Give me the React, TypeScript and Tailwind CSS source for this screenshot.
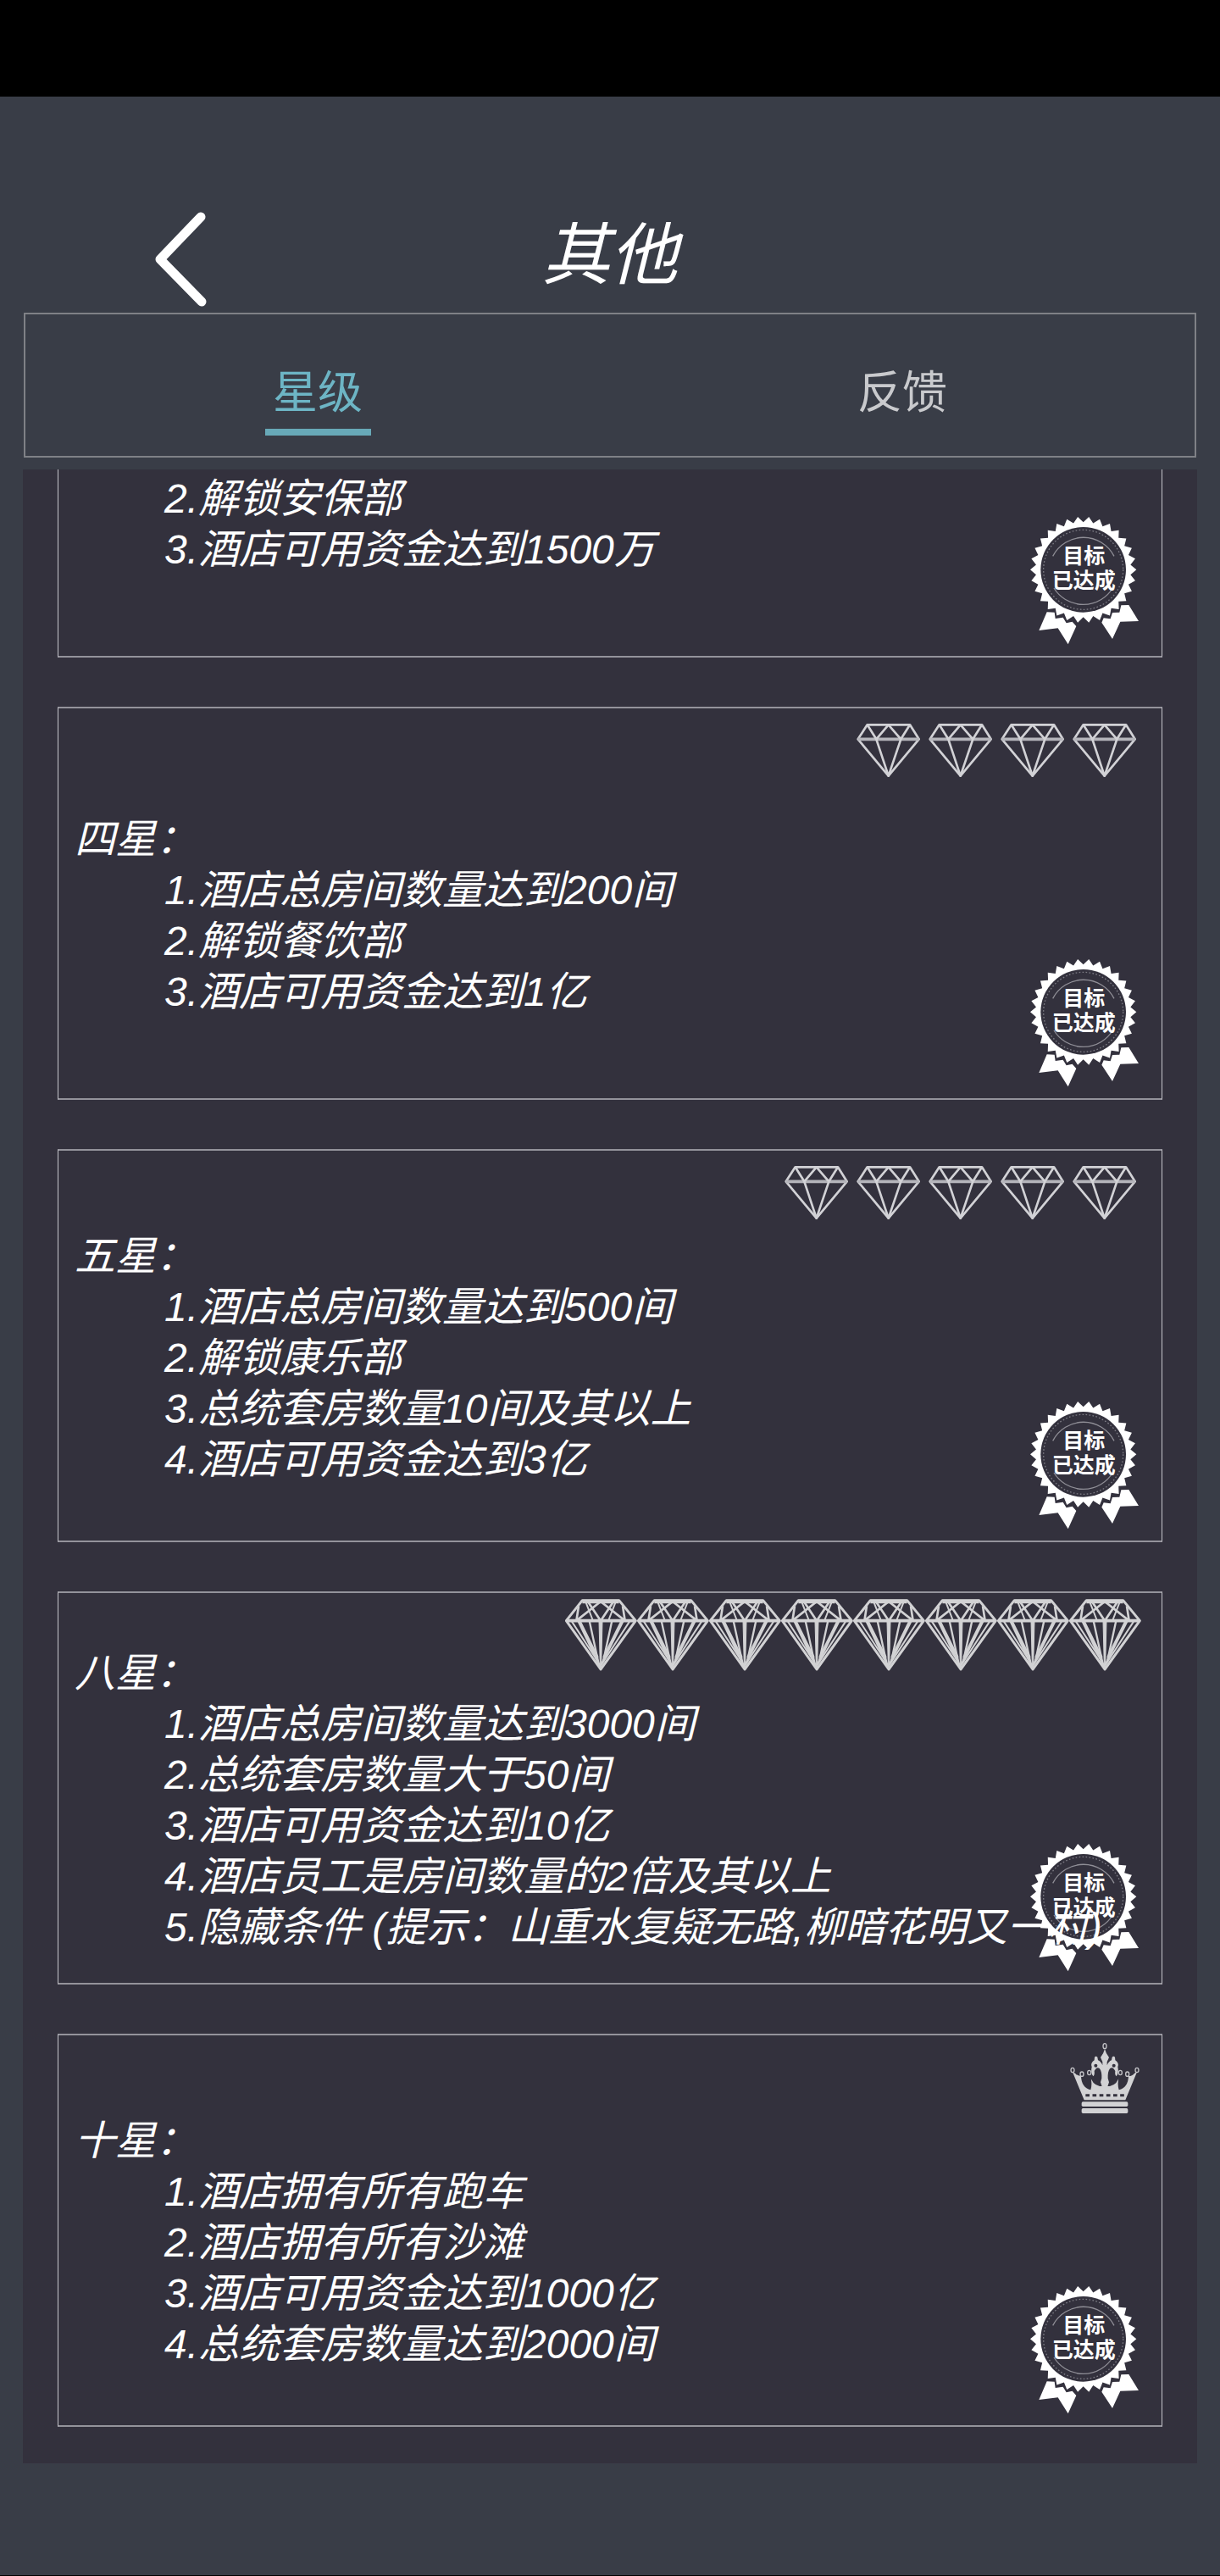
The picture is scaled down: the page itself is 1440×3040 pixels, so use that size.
import { useState } from 'react'

type Rank = 'diamond' | 'brilliant' | 'crown'

interface Level {
  title?: string
  rank?: Rank
  count?: number
  goals: string[]
}

const levels: Level[] = [
  {
    goals: ['2.解锁安保部', '3.酒店可用资金达到1500万'],
  },
  {
    title: '四星：',
    rank: 'diamond',
    count: 4,
    goals: ['1.酒店总房间数量达到200间', '2.解锁餐饮部', '3.酒店可用资金达到1亿'],
  },
  {
    title: '五星：',
    rank: 'diamond',
    count: 5,
    goals: [
      '1.酒店总房间数量达到500间',
      '2.解锁康乐部',
      '3.总统套房数量10间及其以上',
      '4.酒店可用资金达到3亿',
    ],
  },
  {
    title: '八星：',
    rank: 'brilliant',
    count: 8,
    goals: [
      '1.酒店总房间数量达到3000间',
      '2.总统套房数量大于50间',
      '3.酒店可用资金达到10亿',
      '4.酒店员工是房间数量的2倍及其以上',
      '5.隐藏条件 (提示：山重水复疑无路,柳暗花明又一村)',
    ],
  },
  {
    title: '十星：',
    rank: 'crown',
    count: 1,
    goals: [
      '1.酒店拥有所有跑车',
      '2.酒店拥有所有沙滩',
      '3.酒店可用资金达到1000亿',
      '4.总统套房数量达到2000间',
    ],
  },
]

const tabs = ['星级', '反馈']

const Diamond = () => (
  <svg viewBox="0 0 255 255" className="w-[85px] h-[85px]" fill="none" stroke="#d2d2d6" strokeWidth="8" strokeLinejoin="round">
    <path d="M50 37H201L233 88L125 218L17 88Z" />
    <path d="M17 88H233" stroke="#b4b4ba" strokeWidth="11" />
    <path d="M50 37L82 88L125 37L169 88L201 37" />
    <path d="M82 88L125 218L169 88" />
  </svg>
)

const Brilliant = () => (
  <svg viewBox="6 15 255 255" className="w-[85px] h-[85px]" fill="none" stroke="#d2d2d4" strokeWidth="8" strokeLinejoin="round">
    <path d="M67 20H197L256 92L132 264L10 92Z" strokeWidth="9" />
    <path d="M10 92H256" strokeWidth="11" />
    <path d="M67 24H197" strokeWidth="13" />
    <path d="M54 40L46 92L132 24L218 92L210 40" />
    <path d="M88 26L132 92L176 26" />
    <path d="M80 28L104 90M184 28L160 90" strokeWidth="6" />
    <path d="M28 92L132 252L236 92" strokeWidth="6" />
    <path d="M52 92L130 256L212 92M58 92L122 222M206 92L142 222" strokeWidth="7" />
    <path d="M92 92L124 240M172 92L140 240" strokeWidth="7" />
    <path d="M126 92H138L134 250H130Z" fill="#d2d2d4" strokeWidth="3" />
  </svg>
)

const Crown = () => (
  <svg viewBox="12 15 255 255" className="w-[85px] h-[85px]" fill="#d2d2d4">
    <path d="M24 124L33 128Q40 138 54 138Q55 178 88 187Q96 160 84 132Q92 168 120 174H156Q184 168 192 132Q180 160 188 187Q221 178 222 138Q236 138 243 128L252 124L211 223H65Z" />
    <path d="M138 42Q142 58 153 72L146 88V100Q152 86 162 82L164 71Q169 66 174 71L175 82Q190 92 184 106Q189 126 179 139Q173 134 175 120Q166 102 156 112Q148 122 149 146L153 160L147 178H129L123 160L127 146Q128 122 120 112Q110 102 101 120Q103 134 97 139Q87 126 92 106Q86 92 101 82L102 71Q107 66 112 71L114 82Q124 86 130 100V88L123 72Q134 58 138 42Z" />
    <circle cx="106" cy="101" r="6" fill="#33313d" />
    <circle cx="170" cy="101" r="6" fill="#33313d" />
    <g fill="none" stroke="#c4c4c8" strokeWidth="4">
      <ellipse cx="138" cy="32" rx="6" ry="9" />
      <ellipse cx="24" cy="117" rx="6" ry="8" />
      <ellipse cx="252" cy="117" rx="6" ry="8" />
      <ellipse cx="57" cy="131" rx="6" ry="8" />
      <ellipse cx="218" cy="131" rx="6" ry="8" />
      <ellipse cx="83" cy="126" rx="6" ry="8" />
      <ellipse cx="193" cy="126" rx="6" ry="8" />
    </g>
    <path d="M70 206H208" fill="none" stroke="#33313d" strokeWidth="9" strokeDasharray="14 10.5" />
    <rect x="56" y="229" width="164" height="17" rx="5" />
    <rect x="56" y="252" width="164" height="18" rx="5" />
  </svg>
)

const rankIcons = { diamond: Diamond, brilliant: Brilliant, crown: Crown }

// 30 teeth round the seal, the first valley points straight up
const seal = Array.from({ length: 60 }, (_, i) => {
  const r = i % 2 === 0 ? 168 : 188
  const a = (i * 6 - 90) * (Math.PI / 180)
  return `${(296 + r * Math.cos(a)).toFixed(1)},${(253 + r * Math.sin(a)).toFixed(1)}`
}).join(' ')

const Badge = () => (
  <svg viewBox="105 60 390 465" className="absolute right-[26px] bottom-[11px] w-[130px] h-[155px] not-italic">
    <g fill="#fff">
      <path d="M167 403L194 404L197 426L224 422L236 442L257 437L271 453L242 517L206 460L139 468Z" />
      <path d="M430 379L457 378L492 435L427 437L399 498L361 440L368 424L392 427L399 405L424 404Z" />
      <polygon points={seal} />
    </g>
    <circle cx="296" cy="253" r="151" fill="#33313d" />
    <circle cx="296" cy="253" r="141" fill="none" stroke="#7c7b84" strokeWidth="4" strokeDasharray="5 7" />
    <path d="M188 205A122 122 0 0 1 405 205M192 318A122 122 0 0 0 400 318" fill="none" stroke="#8f8e96" strokeWidth="4" />
    <g fill="#fff" fontSize="75" fontWeight="700" textAnchor="middle" fontFamily="'Noto Sans CJK SC', sans-serif">
      <text x="298" y="232">目标</text>
      <text x="298" y="318">已达成</text>
    </g>
  </svg>
)

const LevelCard = ({ level }: { level: Level }) => {
  const Icon = level.rank ? rankIcons[level.rank] : null

  return (
    <section
      className={`relative flex flex-col border-x border-b-2 border-x-[#c4c4ca] border-b-[#94939b] pl-[19px] text-[48px] leading-[60px] italic whitespace-nowrap ${
        level.title ? 'min-h-[464px] justify-center border-t-2 border-t-[#94939b] pt-[30px]' : 'min-h-[222px] pt-[5px]'
      }`}
    >
      {Icon && (
        <div className="absolute top-[7px] right-[24px] flex">
          {Array.from({ length: level.count ?? 0 }, (_, i) => (
            <Icon key={i} />
          ))}
        </div>
      )}
      <Badge />
      {level.title && <h2>{level.title}</h2>}
      <ol className="relative pl-[106px]">
        {level.goals.map((goal) => (
          <li key={goal}>{goal}</li>
        ))}
      </ol>
    </section>
  )
}

const App = () => {
  const [active, setActive] = useState(0)

  return (
    <div className="min-h-screen flex flex-col bg-[#393d47] text-white font-['Liberation_Sans','Noto_Sans_CJK_SC',sans-serif]">
      {/* Status bar */}
      <div className="h-[114px] bg-black" />

      <header className="grid grid-cols-3 items-start pt-[136px] h-[255px]">
        <button type="button" aria-label="返回" className="justify-self-start ml-[183px]">
          <svg viewBox="0 0 61 112" className="w-[61px] h-[112px]" fill="none" stroke="#fff" strokeWidth="11" strokeLinecap="round" strokeLinejoin="round">
            <path d="M54 6L6 56L55 106" />
          </svg>
        </button>
        <h1 className="text-center text-[80px] leading-[104px] italic">其他</h1>
      </header>

      <nav className="mx-7 grid grid-cols-2 h-[171px] border-2 border-[#7f8186]">
        {tabs.map((tab, i) => (
          <button
            key={tab}
            type="button"
            onClick={() => setActive(i)}
            className={`flex flex-col items-center gap-3 pt-[63px] text-[53px] leading-[60px] ${
              active === i ? 'text-[#6db5c5]' : 'text-[#c9cacd]'
            }`}
          >
            {tab}
            {active === i && <span className="w-[125px] h-2 bg-[#68a9b8]" />}
          </button>
        ))}
      </nav>

      <main className="mx-[27px] mt-[14px] px-[41px] pb-[43px] flex flex-col gap-[58px] bg-[#33313d]">
        {levels.map((level, i) => (
          <LevelCard key={i} level={level} />
        ))}
      </main>

      <footer className="grow border-b border-black" />
    </div>
  )
}

export default App
